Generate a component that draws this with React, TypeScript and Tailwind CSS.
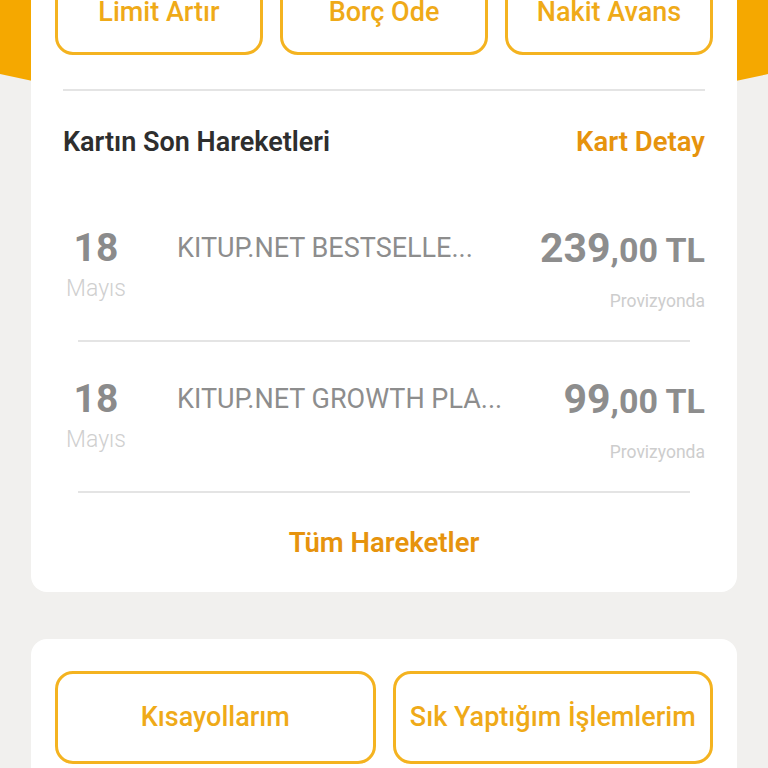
import React from 'react';

const font = { fontFamily: 'Roboto, "Noto Sans", sans-serif' };

interface Movement {
  day: string;
  month: string;
  title: string;
  whole: string;
  cents: string;
  status: string;
}

const movements: Movement[] = [
  { day: '18', month: 'Mayıs', title: 'KITUP.NET BESTSELLE...', whole: '239', cents: ',00 TL', status: 'Provizyonda' },
  { day: '18', month: 'Mayıs', title: 'KITUP.NET GROWTH PLA...', whole: '99', cents: ',00 TL', status: 'Provizyonda' },
];

const QuickAction: React.FC<{ label: string }> = ({ label }) => (
  <button className="h-[115px] rounded-[18px] border-[3px] border-[#f4b320] bg-white flex items-end justify-center pb-[25px]">
    <span className="text-[27px] leading-[30px] font-medium text-[#efaa18]">{label}</span>
  </button>
);

export default function App() {
  return (
    <div className="relative w-full h-[768px] overflow-hidden bg-[#f1f0ee]" style={font}>
      <svg className="absolute left-0 top-0" width="768" height="130" viewBox="0 0 768 130">
        <path d="M0 0H768V74Q384 160 0 74Z" fill="#f5a800" />
      </svg>

      <div className="relative px-[31px]">
        <div className="-mt-[60px] bg-white rounded-[16px] px-[24px] pb-[35px]">
          <div className="grid grid-cols-3 gap-[17px]">
            <QuickAction label="Limit Artır" />
            <QuickAction label="Borç Ode" />
            <QuickAction label="Nakit Avans" />
          </div>

          <div className="mx-[8px] mt-[34px] h-[2px] bg-[#e4e4e4]" />

          <div className="mx-[8px] mt-[37px] flex items-center justify-between">
            <span className="text-[27px] leading-[28px] font-semibold text-[#2e2e2e]">Kartın Son Hareketleri</span>
            <span className="text-[27.5px] leading-[28px] font-semibold text-[#e6930d]">Kart Detay</span>
          </div>

          <div className="mt-[35px]">
            {movements.map((m, i) => (
              <div key={i}>
                <div className="h-[149px] flex items-start px-[8px] pt-[37px]">
                  <div className="w-[66px] flex flex-col items-center">
                    <span className="text-[39px] leading-[40px] font-bold text-[#8b8b8b]">{m.day}</span>
                    <span className="mt-[8px] text-[23px] leading-[26px] font-light text-[#cfcfcf]">{m.month}</span>
                  </div>
                  <div className="ml-[48px] flex-1 h-[40px] flex items-center text-[27px] text-[#8d8d8d]">{m.title}</div>
                  <div className="flex flex-col items-end">
                    <div className="h-[40px] flex items-baseline font-bold text-[#8d8d8d]">
                      <span className="text-[41px] leading-[40px]">{m.whole}</span>
                      <span className="text-[34px] leading-[40px]">{m.cents}</span>
                    </div>
                    <span className="mt-[23px] text-[17.5px] leading-[20px] text-[#cdcdcd]">{m.status}</span>
                  </div>
                </div>
                <div className="mx-[23px] h-[2px] bg-[#e4e4e4]" />
              </div>
            ))}
          </div>

          <div className="mt-[36px] text-center text-[27.5px] leading-[28px] font-semibold text-[#e6930d]">Tüm Hareketler</div>
        </div>

        <div className="mt-[47px] bg-white rounded-[16px] px-[24px] pt-[32px] pb-[30px]">
          <div className="grid grid-cols-2 gap-[17px]">
            <button className="h-[93px] rounded-[18px] border-[3px] border-[#f4b320] bg-white flex items-center justify-center">
              <span className="text-[27px] font-medium text-[#efaa18]">Kısayollarım</span>
            </button>
            <button className="h-[93px] rounded-[18px] border-[3px] border-[#f4b320] bg-white flex items-center justify-center">
              <span className="text-[27px] font-medium text-[#efaa18]">Sık Yaptığım İşlemlerim</span>
            </button>
          </div>
        </div>
      </div>
    </div>
  );
}
